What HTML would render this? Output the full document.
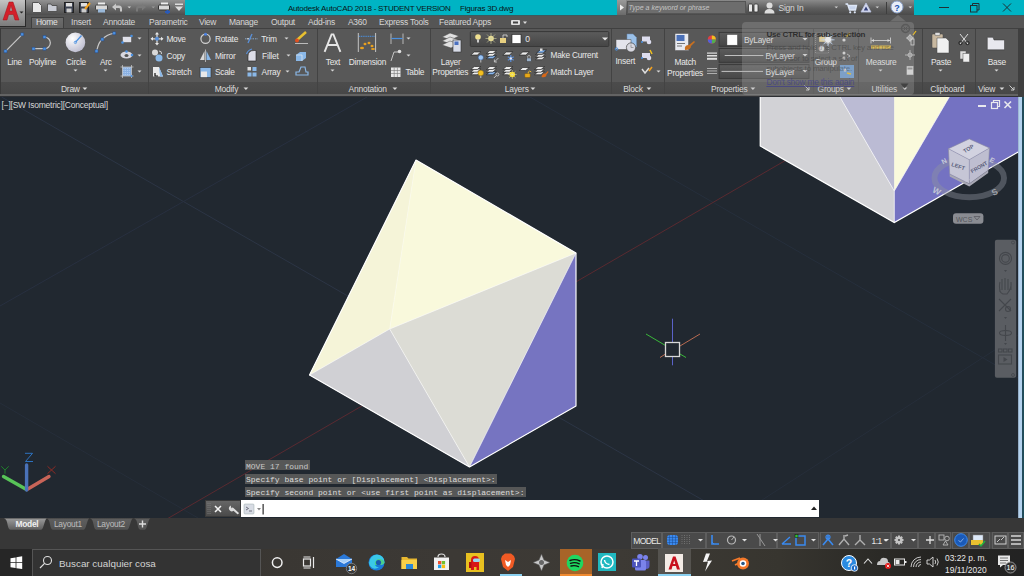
<!DOCTYPE html>
<html><head><meta charset="utf-8">
<style>
*{margin:0;padding:0;box-sizing:border-box}
html,body{width:1024px;height:576px;overflow:hidden;background:#212830;font-family:"Liberation Sans",sans-serif;position:relative}
.a{position:absolute}
.t{position:absolute;white-space:nowrap}
svg.a{overflow:visible}
</style></head><body>

<div class="a" style="left:0px;top:0px;width:1024px;height:15px;background:#00b4c4;"></div>
<div class="a" style="left:0px;top:0px;width:185px;height:15px;background:linear-gradient(#929292,#6a6a6a 55%,#4e4e4e);"></div>
<div class="a" style="left:745px;top:0px;width:169px;height:15px;background:linear-gradient(#8a8a8a,#5e5e5e 55%,#4a4a4a);"></div>
<div class="a" style="left:617px;top:0px;width:128px;height:15px;background:linear-gradient(#8a8a8a,#5e5e5e 55%,#4a4a4a);"></div>
<svg class="a" style="left:32px;top:2px;" width="10" height="11" viewBox="0 0 10 11"><path d="M0.5,0.5 H6.5 L9.5,3.5 V10.5 H0.5 Z" fill="#e8e8e8" stroke="#555"/></svg>
<svg class="a" style="left:47px;top:3px;" width="12" height="9" viewBox="0 0 12 9"><path d="M0.5,1 H4 L5,2.5 H10 V8.5 H0.5 Z" fill="#c9ccd4" stroke="#555"/></svg>
<svg class="a" style="left:64px;top:2px;" width="10" height="11" viewBox="0 0 10 11"><rect x="0.5" y="0.5" width="9" height="10" fill="#3c4250" stroke="#222"/><rect x="2" y="1" width="6" height="3.5" fill="#e0e0e0"/><rect x="2.5" y="6.5" width="5" height="4" fill="#ccc"/></svg>
<svg class="a" style="left:79px;top:2px;" width="12" height="11" viewBox="0 0 12 11"><rect x="0.5" y="0.5" width="9" height="10" fill="#3c4250" stroke="#222"/><rect x="2" y="1" width="6" height="3.5" fill="#e0e0e0"/><rect x="2.5" y="6.5" width="5" height="4" fill="#ccc"/><path d="M6,7 L11,1" stroke="#f0a020" stroke-width="2"/></svg>
<svg class="a" style="left:95px;top:2px;" width="13" height="11" viewBox="0 0 13 11"><rect x="3" y="0.5" width="7" height="3" fill="#eee"/><rect x="0.5" y="3" width="12" height="5" rx="1" fill="#d8d8d8" stroke="#444"/><rect x="3" y="7" width="7" height="3.5" fill="#9ab8d8"/></svg>
<svg class="a" style="left:111px;top:3px;" width="12" height="9" viewBox="0 0 12 9"><path d="M1,4 L5,0.5 V2.5 H8 Q11,2.5 11,6 V8.5 H9 V6 Q9,5 8,5 H5 V7.5 Z" fill="#c8c8c8"/></svg>
<svg class="a" style="left:127.2px;top:6.1px" width="4.6" height="2.8"><polygon points="0.5,0.5 4.1,0.5 2.3,2.3" fill="#cfcfcf"/></svg>
<svg class="a" style="left:135px;top:3px;" width="12" height="9" viewBox="0 0 12 9"><path d="M11,4 L7,0.5 V2.5 H4 Q1,2.5 1,6 V8.5 H3 V6 Q3,5 4,5 H7 V7.5 Z" fill="#7a7a7a"/></svg>
<svg class="a" style="left:150.7px;top:6.1px" width="4.6" height="2.8"><polygon points="0.5,0.5 4.1,0.5 2.3,2.3" fill="#9a9a9a"/></svg>
<svg class="a" style="left:158px;top:2px;" width="13" height="12" viewBox="0 0 13 12"><rect x="3" y="0.5" width="7" height="3" fill="#eee"/><rect x="0.5" y="3" width="11" height="5" rx="1" fill="#d8d8d8" stroke="#333"/><path d="M7,10 h5 M9.5,8 v4" stroke="#2a5ab8" stroke-width="2"/></svg>
<svg class="a" style="left:175px;top:3px;" width="8" height="9" viewBox="0 0 8 9"><rect x="0" y="0.5" width="8" height="1.5" fill="#ddd"/><polygon points="0,3.5 8,3.5 4,8" fill="#ddd"/></svg>
<div class="t" style="left:288px;top:5px;font-size:8.06px;line-height:8.06px;color:#0a1416;font-weight:normal;font-style:normal;font-family:'Liberation Sans',sans-serif;letter-spacing:-0.253px;">Autodesk AutoCAD 2018 - STUDENT VERSION</div>
<div class="t" style="left:460px;top:5px;font-size:8.06px;line-height:8.06px;color:#0a1416;font-weight:normal;font-style:normal;font-family:'Liberation Sans',sans-serif;letter-spacing:-0.230px;">Figuras 3D.dwg</div>
<div class="a" style="left:617px;top:0px;width:9px;height:15px;background:linear-gradient(#9a9a9a,#6a6a6a);"></div>
<svg class="a" style="left:619px;top:4px;" width="6" height="7" viewBox="0 0 6 7"><polygon points="1,0.5 5,3.5 1,6.5" fill="#eee"/></svg>
<div class="a" style="left:626.5px;top:1px;width:119px;height:13px;background:#6d6d6d;border:1px solid #555"></div>
<div class="t" style="left:628.5px;top:4px;font-size:7.05px;line-height:7.05px;color:#c4c4c4;font-weight:normal;font-style:italic;font-family:'Liberation Sans',sans-serif;">Type a keyword or phrase</div>
<svg class="a" style="left:748px;top:3px;" width="11" height="10" viewBox="0 0 11 10"><rect x="0.5" y="1" width="4" height="8" rx="1" fill="#e8e8e8" stroke="#333" stroke-width="0.8"/><rect x="6" y="1" width="4" height="8" rx="1" fill="#e8e8e8" stroke="#333" stroke-width="0.8"/></svg>
<svg class="a" style="left:764px;top:2px;" width="11" height="12" viewBox="0 0 11 12"><circle cx="5.5" cy="3.5" r="3" fill="#ddd"/><path d="M0.5,11.5 Q0.5,7 5.5,7 Q10.5,7 10.5,11.5 Z" fill="#ddd"/></svg>
<div class="t" style="left:778.5px;top:4px;font-size:8.48px;line-height:8.48px;color:#d8d8d8;font-weight:normal;font-style:normal;font-family:'Liberation Sans',sans-serif;letter-spacing:-0.213px;">Sign In</div>
<svg class="a" style="left:834.2px;top:6.1px" width="4.6" height="2.8"><polygon points="0.5,0.5 4.1,0.5 2.3,2.3" fill="#d0d0d0"/></svg>
<svg class="a" style="left:845px;top:3px;" width="13" height="11" viewBox="0 0 13 11"><path d="M0.5,1 H2.5 L4.5,7 H10.5 L11.5,2.5 H3.5" fill="#c8d4ec" stroke="#dde6f6" stroke-width="1.3"/><circle cx="5.2" cy="9.3" r="1.1" fill="#dde6f6"/><circle cx="9.8" cy="9.3" r="1.1" fill="#dde6f6"/></svg>
<svg class="a" style="left:860px;top:2px;" width="12" height="11" viewBox="0 0 12 11"><polygon points="6,1 11,10 1,10" fill="#d8dcf0" stroke="#b8c0e0" stroke-width="0.8"/><polygon points="6,4.5 8.3,8.5 3.7,8.5" fill="#34407a"/></svg>
<svg class="a" style="left:875.2px;top:6.1px" width="4.6" height="2.8"><polygon points="0.5,0.5 4.1,0.5 2.3,2.3" fill="#d0d0d0"/></svg>
<div class="a" style="left:886px;top:2px;width:1px;height:12px;background:#3e3e3e;"></div>
<svg class="a" style="left:890px;top:0px;" width="14" height="14" viewBox="0 0 14 14"><circle cx="7" cy="7" r="6" fill="#e8eef8" stroke="#8aa0c8"/><text x="7" y="10.5" font-size="9" font-weight="bold" text-anchor="middle" fill="#2050b0" font-family="Liberation Sans">?</text></svg>
<svg class="a" style="left:907.7px;top:6.1px" width="4.6" height="2.8"><polygon points="0.5,0.5 4.1,0.5 2.3,2.3" fill="#d0d0d0"/></svg>
<div class="a" style="left:939px;top:7px;width:10px;height:1px;background:#203034;"></div>
<svg class="a" style="left:970px;top:3px;" width="10" height="10" viewBox="0 0 10 10"><rect x="0.5" y="2.5" width="6.5" height="6.5" fill="none" stroke="#203034" stroke-width="1"/><path d="M2.5,2.5 V0.5 H9 V7 H7" fill="none" stroke="#203034" stroke-width="1"/></svg>
<svg class="a" style="left:1002px;top:3px;" width="10" height="10" viewBox="0 0 10 10"><path d="M1,0.5 L9,8.5 M9,0.5 L1,8.5" stroke="#203034" stroke-width="1"/></svg>
<div class="a" style="left:0px;top:15px;width:1024px;height:13px;background:#535353;"></div>
<div class="a" style="left:26px;top:15px;width:998px;height:13px;background:#555555;"></div>
<div class="a" style="left:30.5px;top:17px;width:33px;height:12px;background:linear-gradient(#6c6c6c,#606060);border:1px solid #3e3e3e;border-bottom:none"></div>
<div class="t" style="left:36px;top:18px;font-size:8.48px;line-height:8.48px;color:#e2e2e2;font-weight:normal;font-style:normal;font-family:'Liberation Sans',sans-serif;letter-spacing:-0.320px;">Home</div>
<div class="t" style="left:71px;top:18px;font-size:8.48px;line-height:8.48px;color:#d6d6d6;font-weight:normal;font-style:normal;font-family:'Liberation Sans',sans-serif;letter-spacing:-0.200px;">Insert</div>
<div class="t" style="left:103px;top:18px;font-size:8.48px;line-height:8.48px;color:#d6d6d6;font-weight:normal;font-style:normal;font-family:'Liberation Sans',sans-serif;letter-spacing:-0.240px;">Annotate</div>
<div class="t" style="left:149px;top:18px;font-size:8.48px;line-height:8.48px;color:#d6d6d6;font-weight:normal;font-style:normal;font-family:'Liberation Sans',sans-serif;letter-spacing:-0.232px;">Parametric</div>
<div class="t" style="left:199px;top:18px;font-size:8.48px;line-height:8.48px;color:#d6d6d6;font-weight:normal;font-style:normal;font-family:'Liberation Sans',sans-serif;letter-spacing:-0.258px;">View</div>
<div class="t" style="left:229px;top:18px;font-size:8.48px;line-height:8.48px;color:#d6d6d6;font-weight:normal;font-style:normal;font-family:'Liberation Sans',sans-serif;letter-spacing:-0.289px;">Manage</div>
<div class="t" style="left:271px;top:18px;font-size:8.48px;line-height:8.48px;color:#d6d6d6;font-weight:normal;font-style:normal;font-family:'Liberation Sans',sans-serif;letter-spacing:-0.240px;">Output</div>
<div class="t" style="left:308px;top:18px;font-size:8.48px;line-height:8.48px;color:#d6d6d6;font-weight:normal;font-style:normal;font-family:'Liberation Sans',sans-serif;letter-spacing:-0.233px;">Add-ins</div>
<div class="t" style="left:348px;top:18px;font-size:8.48px;line-height:8.48px;color:#d6d6d6;font-weight:normal;font-style:normal;font-family:'Liberation Sans',sans-serif;letter-spacing:-0.280px;">A360</div>
<div class="t" style="left:379px;top:18px;font-size:8.48px;line-height:8.48px;color:#d6d6d6;font-weight:normal;font-style:normal;font-family:'Liberation Sans',sans-serif;letter-spacing:-0.229px;">Express Tools</div>
<div class="t" style="left:439px;top:18px;font-size:8.48px;line-height:8.48px;color:#d6d6d6;font-weight:normal;font-style:normal;font-family:'Liberation Sans',sans-serif;letter-spacing:-0.240px;">Featured Apps</div>
<div class="a" style="left:185px;top:15px;width:432px;height:1px;background:#3c5a5e;"></div>
<div class="a" style="left:914px;top:15px;width:110px;height:1px;background:#3c5a5e;"></div>
<svg class="a" style="left:510px;top:19px;" width="18" height="8" viewBox="0 0 18 8"><rect x="1" y="1" width="9" height="5" rx="1" fill="#e0e0e0"/><rect x="3" y="2.5" width="5" height="2" fill="#444"/><polygon points="13,2.5 17,2.5 15,5" fill="#ddd"/></svg>
<div class="a" style="left:0px;top:0px;width:26px;height:27px;background:linear-gradient(#c4c4c4,#9c9c9c 50%,#7c7c7c);border-right:1px solid #2a2a2a;border-bottom:1px solid #2a2a2a"></div>
<svg class="a" style="left:2px;top:1px;" width="18" height="20" viewBox="0 0 18 20"><path d="M1,19 L7,1 L11,1 L17,19 L13,19 L11.4,13.5 L6.6,13.5 L5,19 Z M7.5,10 L10.5,10 L9,4.5 Z" fill="#d4202a" stroke="#a01018" stroke-width="0.5"/></svg>
<svg class="a" style="left:19.0px;top:11.0px" width="5" height="3"><polygon points="0.5,0.5 4.5,0.5 2.5,2.5" fill="#222"/></svg>
<div class="a" style="left:0px;top:28px;width:1024px;height:54px;background:#585858;"></div>
<div class="a" style="left:0px;top:28px;width:1024px;height:1px;background:#404040;"></div>
<div class="a" style="left:0px;top:82px;width:1024px;height:12px;background:linear-gradient(#4c4c4c,#474747);"></div>
<div class="a" style="left:0px;top:94px;width:1024px;height:3px;background:#636363;"></div>
<div class="a" style="left:0px;top:96px;width:1024px;height:1px;background:#2e3034;"></div>
<div class="a" style="left:147.5px;top:29px;width:1px;height:65px;background:#434343;"></div>
<div class="a" style="left:316.5px;top:29px;width:1px;height:65px;background:#434343;"></div>
<div class="a" style="left:429.5px;top:29px;width:1px;height:65px;background:#434343;"></div>
<div class="a" style="left:611px;top:29px;width:1px;height:65px;background:#434343;"></div>
<div class="a" style="left:664px;top:29px;width:1px;height:65px;background:#434343;"></div>
<div class="a" style="left:813px;top:29px;width:1px;height:65px;background:#434343;"></div>
<div class="a" style="left:857.5px;top:29px;width:1px;height:65px;background:#434343;"></div>
<div class="a" style="left:921.5px;top:29px;width:1px;height:65px;background:#434343;"></div>
<div class="a" style="left:974.5px;top:29px;width:1px;height:65px;background:#434343;"></div>
<div class="a" style="left:1018px;top:28px;width:6px;height:69px;background:#3f3f3f;"></div>
<div class="a" style="left:0px;top:28px;width:1px;height:66px;background:#3a3a3a;"></div>
<div class="t" style="left:61px;top:85px;font-size:8.48px;line-height:8.48px;color:#dadada;font-weight:normal;font-style:normal;font-family:'Liberation Sans',sans-serif;letter-spacing:-0.280px;">Draw</div>
<svg class="a" style="left:82.1px;top:87.1px" width="5.8" height="3.4"><polygon points="0.5,0.5 5.3,0.5 2.9,2.9" fill="#dadada"/></svg>
<div class="t" style="left:214.7px;top:85px;font-size:8.48px;line-height:8.48px;color:#dadada;font-weight:normal;font-style:normal;font-family:'Liberation Sans',sans-serif;letter-spacing:-0.236px;">Modify</div>
<svg class="a" style="left:243.1px;top:87.1px" width="5.8" height="3.4"><polygon points="0.5,0.5 5.3,0.5 2.9,2.9" fill="#dadada"/></svg>
<div class="t" style="left:348.6px;top:85px;font-size:8.48px;line-height:8.48px;color:#dadada;font-weight:normal;font-style:normal;font-family:'Liberation Sans',sans-serif;letter-spacing:-0.230px;">Annotation</div>
<svg class="a" style="left:391.90000000000003px;top:87.1px" width="5.8" height="3.4"><polygon points="0.5,0.5 5.3,0.5 2.9,2.9" fill="#dadada"/></svg>
<div class="t" style="left:504.7px;top:85px;font-size:8.48px;line-height:8.48px;color:#dadada;font-weight:normal;font-style:normal;font-family:'Liberation Sans',sans-serif;letter-spacing:-0.240px;">Layers</div>
<svg class="a" style="left:529.9px;top:87.1px" width="5.8" height="3.4"><polygon points="0.5,0.5 5.3,0.5 2.9,2.9" fill="#dadada"/></svg>
<div class="t" style="left:623.2px;top:85px;font-size:8.48px;line-height:8.48px;color:#dadada;font-weight:normal;font-style:normal;font-family:'Liberation Sans',sans-serif;letter-spacing:-0.235px;">Block</div>
<svg class="a" style="left:645.9px;top:87.1px" width="5.8" height="3.4"><polygon points="0.5,0.5 5.3,0.5 2.9,2.9" fill="#dadada"/></svg>
<div class="t" style="left:711px;top:85px;font-size:8.48px;line-height:8.48px;color:#dadada;font-weight:normal;font-style:normal;font-family:'Liberation Sans',sans-serif;letter-spacing:-0.219px;">Properties</div>
<svg class="a" style="left:750.1px;top:87.1px" width="5.8" height="3.4"><polygon points="0.5,0.5 5.3,0.5 2.9,2.9" fill="#dadada"/></svg>
<div class="t" style="left:817.6px;top:85px;font-size:8.48px;line-height:8.48px;color:#dadada;font-weight:normal;font-style:normal;font-family:'Liberation Sans',sans-serif;letter-spacing:-0.262px;">Groups</div>
<svg class="a" style="left:846.1px;top:87.1px" width="5.8" height="3.4"><polygon points="0.5,0.5 5.3,0.5 2.9,2.9" fill="#dadada"/></svg>
<div class="t" style="left:871.4px;top:85px;font-size:8.48px;line-height:8.48px;color:#dadada;font-weight:normal;font-style:normal;font-family:'Liberation Sans',sans-serif;letter-spacing:-0.172px;">Utilities</div>
<svg class="a" style="left:902.1px;top:87.1px" width="5.8" height="3.4"><polygon points="0.5,0.5 5.3,0.5 2.9,2.9" fill="#dadada"/></svg>
<div class="t" style="left:930.3px;top:85px;font-size:8.48px;line-height:8.48px;color:#dadada;font-weight:normal;font-style:normal;font-family:'Liberation Sans',sans-serif;letter-spacing:-0.228px;">Clipboard</div>
<div class="t" style="left:978px;top:85px;font-size:8.48px;line-height:8.48px;color:#dadada;font-weight:normal;font-style:normal;font-family:'Liberation Sans',sans-serif;letter-spacing:-0.258px;">View</div>
<svg class="a" style="left:999.1px;top:87.1px" width="5.8" height="3.4"><polygon points="0.5,0.5 5.3,0.5 2.9,2.9" fill="#dadada"/></svg>
<svg class="a" style="left:804px;top:85px;" width="6" height="6" viewBox="0 0 6 6"><path d="M0.5,0.5 L5,5 M5,2 V5 H2" stroke="#ccc" fill="none"/></svg>
<svg class="a" style="left:1009px;top:85px;" width="6" height="6" viewBox="0 0 6 6"><path d="M0.5,0.5 L5,5 M5,2 V5 H2" stroke="#ccc" fill="none"/></svg>
<svg class="a" style="left:0;top:97px" width="1024" height="421" viewBox="0 97 1024 421">
<rect x="0" y="97" width="1024" height="421" fill="#212830"/>
<line x1="1.6" y1="97" x2="720" y2="510" stroke="#2c3545" stroke-width="1"/>
<line x1="0" y1="306" x2="367" y2="97" stroke="#283040" stroke-width="1"/>
<line x1="530" y1="97" x2="1018" y2="378" stroke="#262f3c" stroke-width="1"/>
<line x1="0" y1="403" x2="198" y2="518" stroke="#262e3a" stroke-width="1"/>
<line x1="700" y1="540" x2="1018" y2="335" stroke="#262e3a" stroke-width="1"/>
<line x1="160" y1="523" x2="800" y2="152" stroke="#5a2a30" stroke-width="1"/>
<g stroke-linejoin="round">
<polygon points="416,160 576,253 576,406 469.5,467 309.5,375" fill="#f4f4ec"/>
<polygon points="416,160 389.7,329 309.5,375" fill="#f5f4d8"/>
<polygon points="416,160 576,253 389.7,329" fill="#f9f9dc"/>
<polygon points="309.5,375 389.7,329 469.5,467" fill="#d0d0d4"/>
<polygon points="389.7,329 576,253 469.5,467" fill="#dcdcd5"/>
<polygon points="576,253 576,406 469.5,467" fill="#7674c1"/>
<path d="M416,160 L389.7,329" fill="none" stroke="#ffffff" stroke-opacity="0.5" stroke-width="0.7"/><path d="M576,253 L389.7,329 L309.5,375 M389.7,329 L469.5,467 L576,253" fill="none" stroke="#ffffff" stroke-opacity="0.7" stroke-width="0.8"/>
<polygon points="416,160 576,253 576,406 469.5,467 309.5,375" fill="none" stroke="#ffffff" stroke-width="1.15"/>
</g>
<polygon points="760.2,97 1018.2,97 1018.2,152 894.3,222.6 760.2,146" fill="#f0f0f0"/>
<polygon points="760.2,97 840,97 894.3,191 894.3,222.6 760.2,146" fill="#d2d2d6"/>
<polygon points="840,97 894.3,97 894.3,191" fill="#bbbbd4"/>
<polygon points="894.3,97 949.3,97 894.3,191" fill="#fafadc"/>
<polygon points="949.3,97 1018.2,97 1018.2,152 894.3,222.6 894.3,191" fill="#7472c2"/>
<path d="M840,97 L894.3,191 L949.3,97 M894.3,191 V222.6" fill="none" stroke="#fff" stroke-opacity="0.75" stroke-width="0.9"/>
<polyline points="760.2,97 760.2,146 894.3,222.6 1018.2,152" fill="none" stroke="#fff" stroke-width="1.15"/>
<line x1="672.5" y1="318.7" x2="672.5" y2="342" stroke="#5a62c8" stroke-width="1"/><line x1="672.5" y1="357" x2="672.5" y2="365.3" stroke="#5a62c8" stroke-width="1"/>
<line x1="646" y1="334" x2="665.5" y2="345.5" stroke="#3ab83a" stroke-width="1"/><line x1="680" y1="354" x2="686" y2="357.5" stroke="#3ab83a" stroke-width="1"/>
<line x1="680" y1="346" x2="700" y2="334" stroke="#b86a50" stroke-width="1"/><line x1="660" y1="357.5" x2="665.5" y2="354" stroke="#b86a50" stroke-width="1"/>
<rect x="665.5" y="342.5" width="14" height="14" fill="none" stroke="#d8d8d8" stroke-width="1.3"/>
<line x1="26.5" y1="489.5" x2="3.5" y2="476.5" stroke="#58c458" stroke-width="3.4" stroke-linecap="round"/>
<line x1="27" y1="489.5" x2="49" y2="476.5" stroke="#c86458" stroke-width="3.4" stroke-linecap="round"/>
<line x1="26.6" y1="465" x2="26.6" y2="490" stroke="#4a72b8" stroke-width="3.4" stroke-linecap="round"/>
<path d="M25,453.3 H32.5 L25.5,461.5 H33" fill="none" stroke="#2f7ad0" stroke-width="0.9"/>
<path d="M1.3,466.3 L5,470 L8.7,466.3 M5,470 V473.7" fill="none" stroke="#1f8a2a" stroke-width="0.9"/>
<path d="M47.5,466.3 L55.5,473.7 M55.5,466.3 L47.5,473.7" fill="none" stroke="#9a2a22" stroke-width="0.9"/>
<ellipse cx="969.25" cy="178" rx="34.8" ry="19.2" fill="none" stroke="#9094a0" stroke-opacity="0.42" stroke-width="5.9"/>
<polygon points="949.7,174 969.3,183.8 988.2,170.2 988.2,173 969.3,186.5 949.7,176.5" fill="#a8a8b4"/>
<polygon points="969.3,138.9 989.5,148 969.3,159.7 948.4,148.7" fill="#d2d2e0"/>
<polygon points="948.4,148.7 969.3,159.7 969.3,183.8 949.7,174" fill="#c6c6d6"/>
<polygon points="969.3,159.7 989.5,148 988.2,170.2 969.3,183.8" fill="#bebed0"/>
<polygon points="969.3,138.9 989.5,148 988.2,170.2 969.3,183.8 949.7,174 948.4,148.7" fill="none" stroke="#8a8aa0" stroke-width="0.6"/><path d="M948.4,148.7 L969.3,159.7 L989.5,148 M969.3,159.7 V183.8" fill="none" stroke="#8a8aa0" stroke-width="0.5"/>
<text x="968.6" y="150.6" font-size="5.5" font-weight="bold" fill="#5a5e7c" text-anchor="middle" font-family="Liberation Sans" transform="rotate(-32 968.6 148.7)">TOP</text>
<text x="958.2" y="168.3" font-size="5.5" font-weight="bold" fill="#5a5e7c" text-anchor="middle" font-family="Liberation Sans" transform="rotate(18 958.2 166.3)">LEFT</text>
<text x="979" y="169" font-size="5.3" font-weight="bold" fill="#5a5e7c" text-anchor="middle" font-family="Liberation Sans" transform="rotate(-30 979 167)">FRONT</text>
<text x="941" y="163" font-size="7" font-weight="bold" fill="#c4c8d8" font-family="Liberation Sans" transform="rotate(-28 945 160)">N</text>
<text x="990" y="163" font-size="7" font-weight="bold" fill="#c4c8d8" font-family="Liberation Sans" transform="rotate(28 993 160)">E</text>
<text x="991" y="194" font-size="8.5" font-weight="bold" fill="#a4a8b0" font-family="Liberation Sans" transform="rotate(-28 996 190)">S</text>
<text x="933" y="195" font-size="8.5" font-weight="bold" fill="#c0c4d4" font-family="Liberation Sans" transform="rotate(28 939 191)">W</text>
<rect x="953" y="213.3" width="30.4" height="10.5" rx="3" fill="#8a8c92"/>
<text x="956" y="221.6" font-size="7" fill="#55575c" font-family="Liberation Sans">WCS</text>
<polygon points="974,216.5 980,216.5 977,220" fill="none" stroke="#5a5c62" stroke-width="0.8"/>
<rect x="978" y="105" width="8" height="2" fill="#e8e8ee"/>
<rect x="991.5" y="102.5" width="6" height="6" fill="none" stroke="#e8e8ee" stroke-width="1.2"/><path d="M993.5,102.5 V100.5 H999.5 V106.5 H997.5" fill="none" stroke="#e8e8ee" stroke-width="1.2"/>
<path d="M1004.5,101.5 L1011,108 M1011,101.5 L1004.5,108" stroke="#e8e8ee" stroke-width="1.6"/>
<rect x="1018.2" y="97" width="4" height="421" fill="#b4d2ee"/>
<rect x="1022.2" y="97" width="1.8" height="421" fill="#1f4e5c"/>
<rect x="994.9" y="239.7" width="21.3" height="138" rx="2" fill="#5a5d62"/><g fill="none" stroke="#44474c" stroke-width="1.1"><circle cx="1005.5" cy="258.4" r="6"/><circle cx="1005.5" cy="258.4" r="3.8"/><path d="M1000,292 Q999,285 1000,282 M1002,290 V279 M1005,290 V278 M1008,290 V279 M1011,290 V282 Q1012,288 1007,294 H1003 Q999,292 1000,289"/><path d="M999,299 L1011,311 M1011,299 L999,311"/><circle cx="1008" cy="309" r="2.5"/><ellipse cx="1005.5" cy="333" rx="6" ry="2.5"/><path d="M1005.5,325 V341"/><rect x="998.5" y="349" width="3.5" height="3"/><rect x="1003.5" y="349" width="3.5" height="3"/><rect x="1008.5" y="349" width="3.5" height="3"/><rect x="998.5" y="355" width="13" height="9"/></g><polygon points="1003.5,357 1003.5,362 1007.5,359.5" fill="#44474c"/><g fill="#44474c"><polygon points="1004,270 1007,270 1005.5,272"/><polygon points="1004,317 1007,317 1005.5,319"/><polygon points="1004,343 1007,343 1005.5,345"/></g><circle cx="1013" cy="242.5" r="1.5" fill="none" stroke="#44474c" stroke-width="0.8"/><circle cx="1013" cy="375" r="1.5" fill="none" stroke="#44474c" stroke-width="0.8"/>
</svg>
<div class="t" style="left:1.5px;top:101px;font-size:8.51px;line-height:8.51px;color:#d6d6d6;font-weight:normal;font-style:normal;font-family:'Liberation Sans',sans-serif;letter-spacing:-0.219px;">[&#8722;][SW Isometric][Conceptual]</div>
<div class="a" style="left:244.7px;top:460.4px;width:65.3px;height:10.1px;background:#5c5c5c;opacity:0.9"></div>
<div class="a" style="left:244.7px;top:474px;width:252px;height:9.6px;background:#5c5c5c;opacity:0.9"></div>
<div class="a" style="left:244.7px;top:487px;width:281.3px;height:10px;background:#5c5c5c;opacity:0.9"></div>
<div class="t" style="left:246px;top:463px;font-size:8px;line-height:8px;color:#c8c8c8;font-weight:normal;font-style:normal;font-family:'Liberation Mono',monospace;">MOVE 17 found</div>
<div class="t" style="left:246px;top:476px;font-size:8px;line-height:8px;color:#dcdcdc;font-weight:normal;font-style:normal;font-family:'Liberation Mono',monospace;">Specify base point or [Displacement] &lt;Displacement&gt;:</div>
<div class="t" style="left:246px;top:489px;font-size:8px;line-height:8px;color:#dcdcdc;font-weight:normal;font-style:normal;font-family:'Liberation Mono',monospace;">Specify second point or &lt;use first point as displacement&gt;:</div>
<div class="a" style="left:204.7px;top:500px;width:36.3px;height:17.4px;background:linear-gradient(#666,#4a4a4a);border:1px solid #3a3a3a"></div>
<div class="a" style="left:241px;top:500px;width:578px;height:17.4px;background:#ffffff;"></div>
<svg class="a" style="left:0px;top:28px;" width="150" height="54" viewBox="0 0 150 54"><line x1="5.5" y1="23.3" x2="22.3" y2="6.4" stroke="#c8c8c8" stroke-width="1.2"/><rect x="4.0" y="21.8" width="3" height="3" fill="#4a90e0" stroke="#2a4a80" stroke-width="0.5"/><rect x="20.8" y="4.9" width="3" height="3" fill="#4a90e0" stroke="#2a4a80" stroke-width="0.5"/><path d="M33.5,20.7 H44.5 A5.85,5.85 0 0 0 44.5,9" fill="none" stroke="#c8c8c8" stroke-width="1.2"/><rect x="32.0" y="19.2" width="3" height="3" fill="#4a90e0" stroke="#2a4a80" stroke-width="0.5"/><rect x="43.0" y="19.2" width="3" height="3" fill="#4a90e0" stroke="#2a4a80" stroke-width="0.5"/><rect x="43.0" y="7.5" width="3" height="3" fill="#4a90e0" stroke="#2a4a80" stroke-width="0.5"/><defs><radialGradient id="cg" cx="0.35" cy="0.3" r="0.8"><stop offset="0" stop-color="#ffffff"/><stop offset="1" stop-color="#b8b8cc"/></radialGradient></defs><circle cx="75.4" cy="14.4" r="9.8" fill="url(#cg)"/><line x1="75.4" y1="14.4" x2="81.5" y2="7.5" stroke="#4a90e0" stroke-width="1.3"/><circle cx="75.4" cy="14.4" r="1.2" fill="none" stroke="#4a90e0" stroke-width="0.8"/><path d="M96.5,23.3 Q99,13 102.4,11.4 Q107,6 114.3,5.3" fill="none" stroke="#c8c8c8" stroke-width="1.2"/><rect x="95.0" y="21.8" width="3" height="3" fill="#4a90e0" stroke="#2a4a80" stroke-width="0.5"/><rect x="100.9" y="9.9" width="3" height="3" fill="#4a90e0" stroke="#2a4a80" stroke-width="0.5"/><rect x="112.8" y="3.8" width="3" height="3" fill="#4a90e0" stroke="#2a4a80" stroke-width="0.5"/><rect x="122.5" y="8.5" width="9" height="6" rx="0.8" fill="#e0e0e8" stroke="#333" stroke-width="0.4"/><circle cx="122.5" cy="14.5" r="1.3" fill="#4a90e0"/><circle cx="131.5" cy="8" r="1.3" fill="#4a90e0"/><ellipse cx="126.5" cy="27" rx="6" ry="3.5" fill="#d8d8e0"/><ellipse cx="126.5" cy="27.5" rx="2" ry="1.5" fill="#555"/><circle cx="126.5" cy="23.5" r="1.3" fill="#4a90e0"/><circle cx="132" cy="27" r="1.3" fill="#4a90e0"/><rect x="122.5" y="39" width="9" height="9" fill="#8ab0e0"/><path d="M123.5,40.5 h7 M123.5,42.5 h7 M123.5,44.5 h7 M123.5,46.5 h7" stroke="#d8e8ff" stroke-width="0.6" stroke-dasharray="0.8,1"/><path d="M120.5,39 H133.5 M120.5,48 H133.5 M122.5,37 V50 M131.5,37 V50" stroke="#d0d0d0" stroke-width="0.7"/><circle cx="131.5" cy="48" r="1" fill="#4a90e0"/></svg>
<div class="t" style="left:7.2px;top:59px;font-size:8.27px;line-height:8.27px;color:#e8e8e8;font-weight:normal;font-style:normal;font-family:'Liberation Sans',sans-serif;letter-spacing:-0.222px;">Line</div>
<div class="t" style="left:28.9px;top:59px;font-size:8.27px;line-height:8.27px;color:#e8e8e8;font-weight:normal;font-style:normal;font-family:'Liberation Sans',sans-serif;letter-spacing:-0.206px;">Polyline</div>
<div class="t" style="left:66px;top:59px;font-size:8.27px;line-height:8.27px;color:#e8e8e8;font-weight:normal;font-style:normal;font-family:'Liberation Sans',sans-serif;letter-spacing:-0.200px;">Circle</div>
<div class="t" style="left:99.9px;top:59px;font-size:8.27px;line-height:8.27px;color:#e8e8e8;font-weight:normal;font-style:normal;font-family:'Liberation Sans',sans-serif;letter-spacing:-0.235px;">Arc</div>
<svg class="a" style="left:72.9px;top:68.5px" width="5" height="3"><polygon points="0.5,0.5 4.5,0.5 2.5,2.5" fill="#d8d8d8"/></svg>
<svg class="a" style="left:103.2px;top:68.5px" width="5" height="3"><polygon points="0.5,0.5 4.5,0.5 2.5,2.5" fill="#d8d8d8"/></svg>
<svg class="a" style="left:136.8px;top:37.0px" width="5" height="3"><polygon points="0.5,0.5 4.5,0.5 2.5,2.5" fill="#d8d8d8"/></svg>
<svg class="a" style="left:136.8px;top:53.5px" width="5" height="3"><polygon points="0.5,0.5 4.5,0.5 2.5,2.5" fill="#d8d8d8"/></svg>
<svg class="a" style="left:136.8px;top:70.0px" width="5" height="3"><polygon points="0.5,0.5 4.5,0.5 2.5,2.5" fill="#d8d8d8"/></svg>
<svg class="a" style="left:148px;top:28px;" width="170" height="54" viewBox="0 0 170 54"><path d="M9,5 V16 M3.5,10.8 H14.5" stroke="#d8d8d8" stroke-width="1.3"/><polygon points="9,4 7,6.5 11,6.5" fill="#e8e8e8"/><polygon points="9,17.5 7,15 11,15" fill="#e8e8e8"/><polygon points="2.5,10.8 5,8.8 5,12.8" fill="#e8e8e8"/><polygon points="15.5,10.8 13,8.8 13,12.8" fill="#e8e8e8"/><circle cx="9" cy="10.8" r="2" fill="#5a90d8"/><circle cx="7" cy="24.5" r="3" fill="#d8d8d8"/><circle cx="11" cy="30" r="3.5" fill="#8ab8e8"/><path d="M11,23 Q14,23 13.5,26" stroke="#ddd" fill="none" stroke-width="0.9"/><polygon points="5,39 11,39 15,48.5 5,48.5" fill="#eaeaea"/><polygon points="11,39 15,48.5 12,48.5" fill="#8ab8e8"/><path d="M7,45 V48 H10" stroke="#111" stroke-width="1.2" fill="none"/><circle cx="57.5" cy="10.8" r="4.6" fill="none" stroke="#d0d0d0" stroke-width="1.2"/><circle cx="57.5" cy="6.2" r="1.5" fill="#4a80e0"/><polygon points="52,32 56.5,23 56.5,32" fill="#d8d8d8"/><polygon points="58.5,23 58.5,32 63,32" fill="#8ab8e8"/><line x1="57.5" y1="21.5" x2="57.5" y2="34" stroke="#c8c8c8" stroke-width="0.8"/><rect x="52" y="39.5" width="11" height="10" fill="#8ab8e8"/><rect x="53" y="43.5" width="6" height="6" fill="#e8e8e8"/><rect x="52" y="39.5" width="11" height="10" fill="none" stroke="#333" stroke-width="0.6"/><path d="M97,10.8 H110" stroke="#8ab0d8" stroke-width="0.9" stroke-dasharray="1.5,1"/><line x1="100" y1="15" x2="104" y2="6" stroke="#5a90d8" stroke-width="1.3"/><line x1="99" y1="10.8" x2="101" y2="10.8" stroke="#d8d8d8" stroke-width="1"/><path d="M100,33 V28 Q100,22.5 106,22.5 H108 V33 Z" fill="#dcdce6" stroke="#222" stroke-width="0.6"/><path d="M98.5,26 Q100,22 104,21" stroke="#5a90d8" fill="none" stroke-width="1.2"/><rect x="99.5" y="39" width="3.5" height="3.5" fill="#e0e0e0"/><rect x="104.5" y="39" width="4" height="4" fill="#8ab8e8"/><rect x="99.5" y="44.5" width="4" height="4" fill="#8ab8e8"/><rect x="104.5" y="44.5" width="4" height="4" fill="#8ab8e8"/><path d="M149,12 L158,4" stroke="#e8c030" stroke-width="2.5"/><circle cx="149" cy="12.5" r="2" fill="#e05020"/><line x1="147" y1="15.5" x2="160" y2="15.5" stroke="#bbb" stroke-width="1"/><path d="M148,27 L152,24 H158 V30 L154,33 H148 Z" fill="#8ab8e8"/><path d="M148,27 H154 V33" stroke="#d8e4f0" fill="none" stroke-width="0.8"/><path d="M148,47 V44 H151 L153,39 H157 L158,44 H160 V47 Z" fill="none" stroke="#8ab8e8" stroke-width="1.2"/></svg>
<div class="t" style="left:166.4px;top:35px;font-size:8.37px;line-height:8.37px;color:#e8e8e8;font-weight:normal;font-style:normal;font-family:'Liberation Sans',sans-serif;letter-spacing:-0.287px;">Move</div>
<div class="t" style="left:166.6px;top:52px;font-size:8.37px;line-height:8.37px;color:#e8e8e8;font-weight:normal;font-style:normal;font-family:'Liberation Sans',sans-serif;letter-spacing:-0.274px;">Copy</div>
<div class="t" style="left:166.6px;top:68px;font-size:8.37px;line-height:8.37px;color:#e8e8e8;font-weight:normal;font-style:normal;font-family:'Liberation Sans',sans-serif;letter-spacing:-0.213px;">Stretch</div>
<div class="t" style="left:214.9px;top:35px;font-size:8.37px;line-height:8.37px;color:#e8e8e8;font-weight:normal;font-style:normal;font-family:'Liberation Sans',sans-serif;letter-spacing:-0.231px;">Rotate</div>
<div class="t" style="left:214.9px;top:52px;font-size:8.37px;line-height:8.37px;color:#e8e8e8;font-weight:normal;font-style:normal;font-family:'Liberation Sans',sans-serif;letter-spacing:-0.204px;">Mirror</div>
<div class="t" style="left:214.9px;top:68px;font-size:8.37px;line-height:8.37px;color:#e8e8e8;font-weight:normal;font-style:normal;font-family:'Liberation Sans',sans-serif;letter-spacing:-0.235px;">Scale</div>
<div class="t" style="left:261.3px;top:35px;font-size:8.37px;line-height:8.37px;color:#e8e8e8;font-weight:normal;font-style:normal;font-family:'Liberation Sans',sans-serif;letter-spacing:-0.231px;">Trim</div>
<div class="t" style="left:262px;top:52px;font-size:8.37px;line-height:8.37px;color:#e8e8e8;font-weight:normal;font-style:normal;font-family:'Liberation Sans',sans-serif;letter-spacing:-0.165px;">Fillet</div>
<div class="t" style="left:261.6px;top:68px;font-size:8.37px;line-height:8.37px;color:#e8e8e8;font-weight:normal;font-style:normal;font-family:'Liberation Sans',sans-serif;letter-spacing:-0.225px;">Array</div>
<svg class="a" style="left:284.1px;top:37.3px" width="5" height="3"><polygon points="0.5,0.5 4.5,0.5 2.5,2.5" fill="#d8d8d8"/></svg>
<svg class="a" style="left:286.0px;top:53.7px" width="5" height="3"><polygon points="0.5,0.5 4.5,0.5 2.5,2.5" fill="#d8d8d8"/></svg>
<svg class="a" style="left:285.0px;top:70.3px" width="5" height="3"><polygon points="0.5,0.5 4.5,0.5 2.5,2.5" fill="#d8d8d8"/></svg>
<svg class="a" style="left:322px;top:32px;" width="22" height="22" viewBox="0 0 22 22"><path d="M2.6,19.9 L9.6,2.4 H11.4 L18.4,19.9 M5.5,13 H15.5" fill="none" stroke="#e6e6e6" stroke-width="1.9"/></svg>
<svg class="a" style="left:348px;top:28px;" width="82" height="54" viewBox="0 0 82 54"><line x1="10.3" y1="5" x2="10.3" y2="24" stroke="#d0d0d0" stroke-width="0.9"/><line x1="27.6" y1="5" x2="27.6" y2="24" stroke="#d0d0d0" stroke-width="0.9"/><line x1="11" y1="8.3" x2="27" y2="8.3" stroke="#4a90e0" stroke-width="1" stroke-dasharray="1.2,0.6"/><ellipse cx="14" cy="20" rx="2" ry="1.2" fill="#e8a020"/><ellipse cx="17" cy="16" rx="1.5" ry="1.2" fill="#e8a020"/><ellipse cx="21" cy="15" rx="1.5" ry="1.2" fill="#e8a020"/><ellipse cx="24" cy="18" rx="1.5" ry="1.2" fill="#e8a020"/><ellipse cx="25" cy="21" rx="2" ry="1.1" fill="#e8a020"/><line x1="43" y1="5.5" x2="43" y2="16" stroke="#d0d0d0" stroke-width="0.8"/><line x1="55" y1="5.5" x2="55" y2="16" stroke="#d0d0d0" stroke-width="0.8"/><line x1="43.5" y1="10.5" x2="54.5" y2="10.5" stroke="#4a90e0" stroke-width="1.2"/><path d="M43,33 L46,24 L50,24" stroke="#d0d0d0" stroke-width="0.9" fill="none"/><circle cx="51.5" cy="23.5" r="1.8" fill="#e0e0e0"/><rect x="43" y="39.5" width="9.5" height="9.5" fill="#e8e8e8"/><path d="M43,42.5 H52.5 M43,45.5 H52.5 M46.2,39.5 V49 M49.4,39.5 V49" stroke="#777" stroke-width="0.6"/></svg>
<div class="t" style="left:325.7px;top:58px;font-size:8.37px;line-height:8.37px;color:#e8e8e8;font-weight:normal;font-style:normal;font-family:'Liberation Sans',sans-serif;letter-spacing:-0.215px;">Text</div>
<svg class="a" style="left:329.8px;top:68.5px" width="5" height="3"><polygon points="0.5,0.5 4.5,0.5 2.5,2.5" fill="#d8d8d8"/></svg>
<div class="t" style="left:348.8px;top:58px;font-size:8.37px;line-height:8.37px;color:#e8e8e8;font-weight:normal;font-style:normal;font-family:'Liberation Sans',sans-serif;letter-spacing:-0.247px;">Dimension</div>
<svg class="a" style="left:405.9px;top:37.3px" width="5" height="3"><polygon points="0.5,0.5 4.5,0.5 2.5,2.5" fill="#d8d8d8"/></svg>
<svg class="a" style="left:405.9px;top:53.5px" width="5" height="3"><polygon points="0.5,0.5 4.5,0.5 2.5,2.5" fill="#d8d8d8"/></svg>
<div class="t" style="left:405.4px;top:68px;font-size:8.37px;line-height:8.37px;color:#e8e8e8;font-weight:normal;font-style:normal;font-family:'Liberation Sans',sans-serif;letter-spacing:-0.225px;">Table</div>
<svg class="a" style="left:430px;top:28px;" width="182" height="54" viewBox="0 0 182 54"><g fill="#e0e0e0" stroke="#444" stroke-width="0.5"><polygon points="12,9 20,5 29,8 21,12"/><polygon points="12,13 20,9 29,12 21,16"/><polygon points="12,17 20,13 29,16 21,20"/></g><rect x="23" y="12" width="8" height="12" fill="#d8dce8" stroke="#333" stroke-width="0.6"/><rect x="24.5" y="13.5" width="4" height="3.5" fill="#4a70c0"/><defs><linearGradient id="ldg" x1="0" y1="0" x2="0" y2="1"><stop offset="0" stop-color="#5c5c5c"/><stop offset="1" stop-color="#454545"/></linearGradient></defs><rect x="40.3" y="3.6" width="138.5" height="14.9" rx="1" fill="url(#ldg)" stroke="#383838"/><circle cx="48" cy="9" r="2.8" fill="#f0e090"/><rect x="47" y="11.5" width="2" height="3" fill="#ccc"/><circle cx="61" cy="10.5" r="2.8" fill="#f0e090"/><path d="M61,5 V16 M55.5,10.5 H66.5 M57,6.5 L65,14.5 M65,6.5 L57,14.5" stroke="#d0d0a0" stroke-width="0.6"/><rect x="70" y="10" width="6" height="5" fill="#e8d080"/><path d="M73,10 V7 H77 V9" stroke="#ddd" fill="none" stroke-width="0.8"/><rect x="82" y="6.5" width="9" height="9" fill="#fff" stroke="#222" stroke-width="0.6"/><polygon points="172,9.5 178,9.5 175,12.5" fill="#e8e8e8"/></svg>
<svg class="a" style="left:470px;top:46px;" width="80" height="34" viewBox="0 0 80 34"><polygon points="0.8000000000000114,9.0 4.300000000000011,6.0 10.800000000000011,6.0 7.300000000000011,9.0" fill="#ececec" stroke="#1a1a1a" stroke-width="0.6"/><circle cx="10.800000000000011" cy="11.5" r="2.6" fill="#9ac4f4" stroke="#2a4a80" stroke-width="0.5"/><line x1="10.800000000000011" y1="14" x2="10.800000000000011" y2="16.5" stroke="#ddd" stroke-width="0.8"/><polygon points="16.399999999999977,12.7 19.899999999999977,9.7 26.399999999999977,9.7 22.899999999999977,12.7" fill="#8ab8f0" stroke="#1a1a1a" stroke-width="0.6"/><polygon points="16.399999999999977,10.1 19.899999999999977,7.1 26.399999999999977,7.1 22.899999999999977,10.1" fill="#ececec" stroke="#1a1a1a" stroke-width="0.6"/><polygon points="16.399999999999977,7.5 19.899999999999977,4.5 26.399999999999977,4.5 22.899999999999977,7.5" fill="#ececec" stroke="#1a1a1a" stroke-width="0.6"/><path d="M24.399999999999977,16 L28.399999999999977,12 M24.399999999999977,16 h2.5 M24.399999999999977,16 v-2.5" stroke="#c8c8c8" stroke-width="0.9" fill="none"/><polygon points="32.80000000000001,9.0 36.30000000000001,6.0 42.80000000000001,6.0 39.30000000000001,9.0" fill="#ececec" stroke="#1a1a1a" stroke-width="0.6"/><path d="M40.80000000000001,9 V16 M37.80000000000001,10.7 L43.80000000000001,14.3 M43.80000000000001,10.7 L37.80000000000001,14.3" stroke="#5a8ad0" stroke-width="1.3"/><circle cx="40.80000000000001" cy="12.5" r="1.2" fill="#dde8ff"/><polygon points="49.25,9.0 52.75,6.0 59.25,6.0 55.75,9.0" fill="#ececec" stroke="#1a1a1a" stroke-width="0.6"/><rect x="56.75" y="12" width="4.5" height="3.5" fill="#9ab0c8" stroke="#333" stroke-width="0.4"/><path d="M57.75,12 V10 Q59.05,8.7 60.25,10 V12" stroke="#bbb" stroke-width="0.8" fill="none"/><polygon points="65.5,13.7 69.0,10.7 75.5,10.7 72.0,13.7" fill="#ececec" stroke="#1a1a1a" stroke-width="0.6"/><polygon points="65.5,11.1 69.0,8.1 75.5,8.1 72.0,11.1" fill="#ececec" stroke="#1a1a1a" stroke-width="0.6"/><polygon points="65.5,8.5 69.0,5.5 75.5,5.5 72.0,8.5" fill="#ececec" stroke="#1a1a1a" stroke-width="0.6"/><polygon points="66.5,7.0 70.0,4.0 76.5,4.0 73.0,7.0" fill="#7aa8e0" stroke="#1a1a1a" stroke-width="0.6"/><rect x="70.0" y="2.5" width="2.5" height="2.5" fill="#ddd"/><polygon points="0.8000000000000114,28.7 4.300000000000011,25.7 10.800000000000011,25.7 7.300000000000011,28.7" fill="#ececec" stroke="#1a1a1a" stroke-width="0.6"/><polygon points="0.8000000000000114,26.1 4.300000000000011,23.1 10.800000000000011,23.1 7.300000000000011,26.1" fill="#ececec" stroke="#1a1a1a" stroke-width="0.6"/><polygon points="0.8000000000000114,23.5 4.300000000000011,20.5 10.800000000000011,20.5 7.300000000000011,23.5" fill="#ececec" stroke="#1a1a1a" stroke-width="0.6"/><circle cx="10.800000000000011" cy="27" r="2.8" fill="#f4c020" stroke="#8a6a10" stroke-width="0.4"/><line x1="10.800000000000011" y1="29.8" x2="10.800000000000011" y2="32" stroke="#ddd" stroke-width="0.8"/><polygon points="16.399999999999977,28.7 19.899999999999977,25.7 26.399999999999977,25.7 22.899999999999977,28.7" fill="#8ab8f0" stroke="#1a1a1a" stroke-width="0.6"/><polygon points="16.399999999999977,26.1 19.899999999999977,23.1 26.399999999999977,23.1 22.899999999999977,26.1" fill="#ececec" stroke="#1a1a1a" stroke-width="0.6"/><polygon points="16.399999999999977,23.5 19.899999999999977,20.5 26.399999999999977,20.5 22.899999999999977,23.5" fill="#ececec" stroke="#1a1a1a" stroke-width="0.6"/><circle cx="27.399999999999977" cy="28.5" r="1.5" fill="none" stroke="#ccc" stroke-width="0.9"/><path d="M26.399999999999977,29.5 L23.899999999999977,32" stroke="#ccc" stroke-width="1"/><polygon points="32.80000000000001,28.7 36.30000000000001,25.7 42.80000000000001,25.7 39.30000000000001,28.7" fill="#ececec" stroke="#1a1a1a" stroke-width="0.6"/><polygon points="32.80000000000001,26.1 36.30000000000001,23.1 42.80000000000001,23.1 39.30000000000001,26.1" fill="#ececec" stroke="#1a1a1a" stroke-width="0.6"/><polygon points="32.80000000000001,23.5 36.30000000000001,20.5 42.80000000000001,20.5 39.30000000000001,23.5" fill="#ececec" stroke="#1a1a1a" stroke-width="0.6"/><circle cx="42.30000000000001" cy="28.5" r="2.8" fill="#f8d818"/><path d="M42.30000000000001,24 V33 M37.80000000000001,28.5 H46.80000000000001 M39.10000000000001,25.3 L45.500000000000014,31.7 M45.500000000000014,25.3 L39.10000000000001,31.7" stroke="#e8e0a0" stroke-width="0.5"/><polygon points="49.25,24.5 52.75,21.5 59.25,21.5 55.75,24.5" fill="#ececec" stroke="#1a1a1a" stroke-width="0.6"/><rect x="54.75" y="27.5" width="5.5" height="4" rx="1" fill="#e8a818" stroke="#6a4a08" stroke-width="0.4"/><path d="M58.25,27.5 V26 Q59.75,24 61.25,26" stroke="#f0c030" stroke-width="0.9" fill="none"/><polygon points="64.5,28.7 68.0,25.7 74.5,25.7 71.0,28.7" fill="#ececec" stroke="#1a1a1a" stroke-width="0.6"/><polygon points="64.5,26.1 68.0,23.1 74.5,23.1 71.0,26.1" fill="#ececec" stroke="#1a1a1a" stroke-width="0.6"/><polygon points="64.5,23.5 68.0,20.5 74.5,20.5 71.0,23.5" fill="#ececec" stroke="#1a1a1a" stroke-width="0.6"/><path d="M71.5,31 Q72.5,27 75.5,27.5 L78.0,25 L78.5,26 L76.5,28.5 Q76.5,32 71.5,31 Z" fill="#d86818"/></svg>
<div class="t" style="left:440.8px;top:58px;font-size:8.37px;line-height:8.37px;color:#e8e8e8;font-weight:normal;font-style:normal;font-family:'Liberation Sans',sans-serif;letter-spacing:-0.235px;">Layer</div>
<div class="t" style="left:432.3px;top:68px;font-size:8.37px;line-height:8.37px;color:#e8e8e8;font-weight:normal;font-style:normal;font-family:'Liberation Sans',sans-serif;letter-spacing:-0.214px;">Properties</div>
<div class="t" style="left:525.2px;top:35px;font-size:8.48px;line-height:8.48px;color:#e8e8e8;font-weight:normal;font-style:normal;font-family:'Liberation Sans',sans-serif;letter-spacing:-0.267px;">0</div>
<div class="t" style="left:550.6px;top:52px;font-size:8.27px;line-height:8.27px;color:#e8e8e8;font-weight:normal;font-style:normal;font-family:'Liberation Sans',sans-serif;letter-spacing:-0.237px;">Make Current</div>
<div class="t" style="left:550.6px;top:69px;font-size:8.27px;line-height:8.27px;color:#e8e8e8;font-weight:normal;font-style:normal;font-family:'Liberation Sans',sans-serif;letter-spacing:-0.235px;">Match Layer</div>
<svg class="a" style="left:612px;top:28px;" width="52" height="54" viewBox="0 0 52 54"><path d="M15,6 H21 L24.5,9.5 V19 H15 Z" fill="#9ac0e8" stroke="#6a8ab0" stroke-width="0.5"/><path d="M4,11.5 H19 V21.5 H4 Z" fill="#e4e4ec" stroke="#444" stroke-width="0.5"/><circle cx="19" cy="19.5" r="4.6" fill="#d8d8e0" stroke="#444" stroke-width="0.7"/><path d="M19,16.5 V19.5 H21.5" stroke="#777" stroke-width="0.6" fill="none"/><circle cx="4.5" cy="21" r="1.3" fill="none" stroke="#4a90e0" stroke-width="0.9"/><rect x="30" y="8.5" width="8" height="5" fill="#dde"/><circle cx="37" cy="14" r="2.3" fill="#dde"/><circle cx="30" cy="14" r="1" fill="#4a90e0"/><rect x="30" y="25" width="8" height="5" fill="#dde"/><circle cx="37" cy="30" r="2.3" fill="#dde"/><path d="M38,22 L40,26" stroke="#f0c020" stroke-width="1.5"/><circle cx="30" cy="30" r="1" fill="#4a90e0"/><path d="M30,41 L33,45 L37,40" stroke="#ddd" fill="none" stroke-width="1.5"/><path d="M37,43 L40,39" stroke="#f0a020" stroke-width="1.5"/></svg>
<div class="t" style="left:615.4px;top:57px;font-size:8.37px;line-height:8.37px;color:#e8e8e8;font-weight:normal;font-style:normal;font-family:'Liberation Sans',sans-serif;letter-spacing:-0.196px;">Insert</div>
<svg class="a" style="left:655.8px;top:69.7px" width="5" height="3"><polygon points="0.5,0.5 4.5,0.5 2.5,2.5" fill="#d8d8d8"/></svg>
<svg class="a" style="left:664px;top:28px;" width="150" height="54" viewBox="0 0 150 54"><rect x="11" y="5.5" width="13.5" height="17" fill="#e8eaf0" stroke="#555" stroke-width="0.5"/><rect x="12.5" y="7" width="8" height="6" fill="#4a70b8"/><path d="M13,15.5 H21 M13,18 H18" stroke="#555" stroke-width="0.8"/><path d="M21,22 Q20,17 25,17 L30,13 L31,14 L27,18 Q27,22 21,22 Z" fill="#c87020"/><circle cx="47.8" cy="11.5" r="4" fill="#e04040"/><path d="M47.8,11.5 L47.8,7.5 A4,4 0 0 1 51.8,11.5 Z" fill="#f0c020"/><path d="M47.8,11.5 L51.8,11.5 A4,4 0 0 1 47.8,15.5 Z" fill="#50b050"/><path d="M47.8,11.5 L47.8,15.5 A4,4 0 0 1 43.8,11.5 Z" fill="#5060e0"/><g fill="#e0e0e0"><rect x="43" y="24.5" width="10" height="1.2"/><rect x="43" y="27" width="10" height="1.5"/><rect x="43" y="29.8" width="10" height="2"/></g><g fill="#b8b8b8"><rect x="43" y="40" width="10" height="0.9"/><rect x="43" y="42.5" width="10" height="0.9"/><rect x="43" y="45" width="10" height="0.9"/></g><defs><linearGradient id="pdg" x1="0" y1="0" x2="0" y2="1"><stop offset="0" stop-color="#5c5c5c"/><stop offset="1" stop-color="#474747"/></linearGradient></defs><rect x="55.1" y="4.4" width="89.9" height="13.9" fill="url(#pdg)" stroke="#3a3a3a"/><rect x="55.1" y="20.5" width="89.9" height="13.9" fill="url(#pdg)" stroke="#3a3a3a"/><rect x="55.1" y="36.6" width="89.9" height="13.9" fill="url(#pdg)" stroke="#3a3a3a"/><rect x="62.9" y="6.4" width="10.7" height="10.8" fill="#fff" stroke="#333" stroke-width="0.5"/><line x1="60.7" y1="27.5" x2="99.4" y2="27.5" stroke="#f0f0f0" stroke-width="0.7"/><line x1="57.5" y1="43.4" x2="99" y2="43.4" stroke="#e0e0e0" stroke-width="0.8"/><polygon points="138.5,10 143.5,10 141,12.5" fill="#ddd"/><polygon points="138.5,26 143.5,26 141,28.5" fill="#ddd"/><polygon points="138.5,42 143.5,42 141,44.5" fill="#ddd"/></svg>
<div class="t" style="left:674.5px;top:58px;font-size:8.37px;line-height:8.37px;color:#e8e8e8;font-weight:normal;font-style:normal;font-family:'Liberation Sans',sans-serif;letter-spacing:-0.256px;">Match</div>
<div class="t" style="left:667.1px;top:69px;font-size:8.37px;line-height:8.37px;color:#e8e8e8;font-weight:normal;font-style:normal;font-family:'Liberation Sans',sans-serif;letter-spacing:-0.214px;">Properties</div>
<div class="t" style="left:744px;top:36px;font-size:8.37px;line-height:8.37px;color:#e8e8e8;font-weight:normal;font-style:normal;font-family:'Liberation Sans',sans-serif;letter-spacing:-0.246px;">ByLayer</div>
<div class="t" style="left:765.6px;top:52px;font-size:8.37px;line-height:8.37px;color:#e8e8e8;font-weight:normal;font-style:normal;font-family:'Liberation Sans',sans-serif;letter-spacing:-0.246px;">ByLayer</div>
<div class="t" style="left:765.6px;top:68px;font-size:8.37px;line-height:8.37px;color:#e8e8e8;font-weight:normal;font-style:normal;font-family:'Liberation Sans',sans-serif;letter-spacing:-0.246px;">ByLayer</div>
<svg class="a" style="left:813px;top:28px;" width="211" height="54" viewBox="0 0 211 54"><rect x="2.5" y="5" width="13" height="20" fill="none" stroke="#aaa" stroke-dasharray="1,1" stroke-width="0.6"/><rect x="6" y="8" width="6" height="6" fill="#f0d890" stroke="#555" stroke-width="0.4"/><circle cx="8.7" cy="20.4" r="3" fill="#e8e8e8" stroke="#555" stroke-width="0.4"/><path d="M15,5.5 V18 M8.5,11.8 H21.5 M10.5,7.3 L19.5,16.3 M19.5,7.3 L10.5,16.3" stroke="#bcd8ff" stroke-width="0.9"/><circle cx="15" cy="11.8" r="3" fill="#ffffff"/><circle cx="15" cy="11.8" r="4.5" fill="#ffffff" fill-opacity="0.35"/><circle cx="31" cy="12" r="1.6" fill="#ddd"/><path d="M33,9 L37,5" stroke="#f0c020" stroke-width="1.3"/><circle cx="31" cy="25" r="1.5" fill="#ddd"/><circle cx="31" cy="30" r="1.5" fill="#ddd"/><path d="M34,26 L37,28 L34,30" stroke="#ccc" fill="none" stroke-width="0.8"/><rect x="27" y="37" width="14" height="13" fill="#6a9ad0"/><circle cx="32" cy="42" r="1.5" fill="#eee"/><path d="M34,45 L38,46" stroke="#f0c020" stroke-width="1.5"/><line x1="58.5" y1="12.5" x2="77" y2="12.5" stroke="#e8e8e8" stroke-width="0.8"/><path d="M58,9.5 V15.5 M77.5,9.5 V15.5" stroke="#e8e8e8" stroke-width="0.8"/><polygon points="58.5,12.5 61,11 61,14" fill="#e8e8e8"/><polygon points="77,12.5 74.5,11 74.5,14" fill="#e8e8e8"/><rect x="58" y="17.5" width="20" height="3.2" fill="#e8c040"/><path d="M59,17.5 v1.5 M61,17.5 v1.5 M63,17.5 v1.5 M65,17.5 v1.5 M67,17.5 v1.5 M69,17.5 v1.5 M71,17.5 v1.5 M73,17.5 v1.5 M75,17.5 v1.5" stroke="#8a6a10" stroke-width="0.5"/><circle cx="97" cy="10" r="2.3" fill="none" stroke="#ddd" stroke-width="1"/><path d="M97,6 V14 M93,10 H101" stroke="#ddd" stroke-width="0.8"/><rect x="98" y="11" width="3" height="6" fill="none" stroke="#ddd" stroke-width="0.8"/><path d="M100,7 L103,3" stroke="#f0c020" stroke-width="1.2"/><circle cx="97" cy="27" r="2" fill="none" stroke="#ccc" stroke-width="0.9"/><path d="M97,22 V32 M92,27 H102" stroke="#ccc" stroke-width="0.8"/><rect x="93.5" y="38" width="7" height="9" fill="#e0e0e0" stroke="#666" stroke-width="0.5"/><rect x="94.5" y="39.5" width="5" height="2" fill="#888"/><rect x="119" y="6" width="11" height="14" rx="1" fill="#c8b8a0" stroke="#444" stroke-width="0.5"/><rect x="122" y="4.5" width="5" height="3" fill="#ddd" stroke="#444" stroke-width="0.4"/><path d="M124,10 H133 L136,13 V25 H124 Z" fill="#f0f0f0" stroke="#444" stroke-width="0.5"/><path d="M147,6 L155,16 M155,6 L147,16" stroke="#ddd" stroke-width="1"/><circle cx="147.5" cy="15" r="1.7" fill="none" stroke="#222" stroke-width="0.9"/><circle cx="154.5" cy="15" r="1.7" fill="none" stroke="#222" stroke-width="0.9"/><rect x="147" y="23" width="6" height="8" fill="#ddd" stroke="#555" stroke-width="0.5"/><rect x="150" y="25.5" width="6.5" height="8.5" fill="#eee" stroke="#555" stroke-width="0.5"/><path d="M174.3,9.3 H180 L181,12 H191.5 V21.8 H174.3 Z" fill="#e8e8ee" stroke="#333" stroke-width="0.5"/></svg>
<div class="t" style="left:814.8px;top:58px;font-size:8.37px;line-height:8.37px;color:#e8e8e8;font-weight:normal;font-style:normal;font-family:'Liberation Sans',sans-serif;letter-spacing:-0.261px;">Group</div>
<div class="t" style="left:865.8px;top:58px;font-size:8.37px;line-height:8.37px;color:#e8e8e8;font-weight:normal;font-style:normal;font-family:'Liberation Sans',sans-serif;letter-spacing:-0.261px;">Measure</div>
<svg class="a" style="left:878.1px;top:68.5px" width="5" height="3"><polygon points="0.5,0.5 4.5,0.5 2.5,2.5" fill="#d8d8d8"/></svg>
<div class="t" style="left:931px;top:58px;font-size:8.37px;line-height:8.37px;color:#e8e8e8;font-weight:normal;font-style:normal;font-family:'Liberation Sans',sans-serif;letter-spacing:-0.240px;">Paste</div>
<svg class="a" style="left:937.5px;top:69.0px" width="5" height="3"><polygon points="0.5,0.5 4.5,0.5 2.5,2.5" fill="#d8d8d8"/></svg>
<div class="t" style="left:987.8px;top:58px;font-size:8.37px;line-height:8.37px;color:#e8e8e8;font-weight:normal;font-style:normal;font-family:'Liberation Sans',sans-serif;letter-spacing:-0.268px;">Base</div>
<svg class="a" style="left:993.5px;top:68.5px" width="5" height="3"><polygon points="0.5,0.5 4.5,0.5 2.5,2.5" fill="#d8d8d8"/></svg>
<div class="a" style="left:742.4px;top:21.5px;width:171.6px;height:73.3px;background:rgba(175,175,175,0.28);border-radius:4px"></div>
<svg class="a" style="left:890px;top:15px;" width="16" height="7" viewBox="0 0 16 7"><polygon points="0,6.5 8,0 16,6.5" fill="rgba(175,175,175,0.28)"/></svg>
<svg class="a" style="left:900px;top:23px;" width="11" height="11" viewBox="0 0 11 11"><circle cx="5.5" cy="5.5" r="4" fill="none" stroke="#5a5a5a" stroke-width="1.4"/><path d="M3.5,3.5 L7.5,7.5 M7.5,3.5 L3.5,7.5" stroke="#5a5a5a" stroke-width="1"/></svg>
<svg class="a" style="left:900px;top:83px;" width="9" height="6" viewBox="0 0 9 6"><polygon points="0.5,0.5 8.5,0.5 4.5,5.5" fill="#3a3a3a" fill-opacity="0.8"/></svg>
<div class="t" style="left:766.4px;top:31px;font-size:8.01px;line-height:8.01px;color:rgba(30,30,30,0.82);font-weight:bold;font-style:normal;font-family:'Liberation Sans',sans-serif;letter-spacing:-0.227px;">Use CTRL for sub-selection</div>
<div class="t" style="left:766.4px;top:44px;font-size:8.01px;line-height:8.01px;color:rgba(45,45,45,0.42);font-weight:normal;font-style:normal;font-family:'Liberation Sans',sans-serif;letter-spacing:-0.217px;">Press and hold the CTRL key and use</div>
<div class="t" style="left:766.4px;top:55px;font-size:8.01px;line-height:8.01px;color:rgba(45,45,45,0.42);font-weight:normal;font-style:normal;font-family:'Liberation Sans',sans-serif;letter-spacing:-0.186px;">the cursor to select a set of</div>
<div class="t" style="left:766.4px;top:65px;font-size:8.01px;line-height:8.01px;color:rgba(45,45,45,0.42);font-weight:normal;font-style:normal;font-family:'Liberation Sans',sans-serif;letter-spacing:-0.204px;">subobjects to manipulate.</div>
<div class="t" style="left:766.4px;top:78px;font-size:8.37px;line-height:8.37px;color:rgba(50,50,150,0.55);font-weight:normal;font-style:normal;font-family:'Liberation Sans',sans-serif;letter-spacing:-0.218px;text-decoration:underline">Don&#39;t show me this again</div>
<div class="a" style="left:0px;top:518px;width:1024px;height:31px;background:#373737;"></div>
<svg class="a" style="left:0px;top:518px;" width="160" height="13" viewBox="0 0 160 13"><defs><linearGradient id="mg" x1="0" y1="0" x2="0" y2="1"><stop offset="0" stop-color="#9a9a9a"/><stop offset="1" stop-color="#5e5e5e"/></linearGradient><linearGradient id="lg" x1="0" y1="0" x2="0" y2="1"><stop offset="0" stop-color="#5e5e5e"/><stop offset="1" stop-color="#525252"/></linearGradient></defs><path d="M46,0.5 C48,0.5 48.8,1.5 49.6,4.5 L50.6,9 C51.2,11 52.2,11.8 54,11.8 L82.5,11.8 C84.3,11.8 85.0,11 85.7,9 L87.7,2.8 C88.3,1 88.9,0.5 90.0,0.5 Z" fill="url(#lg)"/><path d="M89.5,0.5 C91.5,0.5 92.3,1.5 93.1,4.5 L94.1,9 C94.7,11 95.7,11.8 97.5,11.8 L126,11.8 C127.8,11.8 128.5,11 129.2,9 L131.2,2.8 C131.8,1 132.4,0.5 133.5,0.5 Z" fill="url(#lg)"/><path d="M133.5,0.5 C135.5,0.5 136.3,1.5 137.1,4.5 L138.1,9 C138.7,11 139.7,11.8 141.5,11.8 L143.5,11.8 C145.3,11.8 146.0,11 146.7,9 L148.7,2.8 C149.3,1 149.9,0.5 151.0,0.5 Z" fill="url(#lg)"/><path d="M3.5,0.5 C5.5,0.5 6.3,1.5 7.1,4.5 L8.1,9 C8.7,11 9.7,11.8 11.5,11.8 L40,11.8 C41.8,11.8 42.5,11 43.2,9 L45.2,2.8 C45.8,1 46.4,0.5 47.5,0.5 Z" fill="url(#mg)"/><path d="M139,6 H146 M142.5,2.5 V9.5" stroke="#dddddd" stroke-width="1.4"/></svg>
<div class="t" style="left:15.6px;top:520px;font-size:8.37px;line-height:8.37px;color:#f0f0f0;font-weight:bold;font-style:normal;font-family:'Liberation Sans',sans-serif;letter-spacing:-0.272px;">Model</div>
<div class="t" style="left:53.9px;top:520px;font-size:8.37px;line-height:8.37px;color:#bcbcbc;font-weight:normal;font-style:normal;font-family:'Liberation Sans',sans-serif;letter-spacing:-0.239px;">Layout1</div>
<div class="t" style="left:96.9px;top:520px;font-size:8.37px;line-height:8.37px;color:#bcbcbc;font-weight:normal;font-style:normal;font-family:'Liberation Sans',sans-serif;letter-spacing:-0.239px;">Layout2</div>
<div class="a" style="left:630.5px;top:531.5px;width:394px;height:17px;background:#4a4a4a;"></div>
<div class="a" style="left:630.5px;top:531.5px;width:31.5px;height:17px;background:transparent;border:1px solid #5e5e5e"></div>
<div class="a" style="left:662px;top:531.5px;width:44px;height:17px;background:transparent;border:1px solid #5e5e5e"></div>
<div class="a" style="left:706px;top:531.5px;width:70.5px;height:17px;background:transparent;border:1px solid #5e5e5e"></div>
<div class="a" style="left:777px;top:531.5px;width:41.5px;height:17px;background:transparent;border:1px solid #5e5e5e"></div>
<div class="a" style="left:820px;top:531.5px;width:70.5px;height:17px;background:transparent;border:1px solid #5e5e5e"></div>
<div class="a" style="left:891px;top:531.5px;width:26.5px;height:17px;background:transparent;border:1px solid #5e5e5e"></div>
<div class="a" style="left:918px;top:531.5px;width:16.5px;height:17px;background:transparent;border:1px solid #5e5e5e"></div>
<div class="a" style="left:935px;top:531.5px;width:16px;height:17px;background:transparent;border:1px solid #5e5e5e"></div>
<div class="a" style="left:952px;top:531.5px;width:16.5px;height:17px;background:transparent;border:1px solid #5e5e5e"></div>
<div class="a" style="left:969px;top:531.5px;width:21px;height:17px;background:transparent;border:1px solid #5e5e5e"></div>
<div class="a" style="left:992px;top:531.5px;width:15.5px;height:17px;background:transparent;border:1px solid #5e5e5e"></div>
<div class="a" style="left:1008px;top:531.5px;width:16px;height:17px;background:transparent;border:1px solid #5e5e5e"></div>
<div class="t" style="left:633.3px;top:537px;font-size:8.59px;line-height:8.59px;color:#e8e8e8;font-weight:normal;font-style:normal;font-family:'Liberation Sans',sans-serif;letter-spacing:-0.704px;">MODEL</div>
<svg class="a" style="left:662px;top:531px;" width="362" height="18" viewBox="0 0 362 18"><g fill="#3a8af0"><rect x="5" y="4" width="11" height="10" rx="3"/></g><path d="M5,6.5 H16 M5,9 H16 M5,11.5 H16 M7.5,4 V14 M10.5,4 V14 M13.5,4 V14" stroke="#1a4a90" stroke-width="0.5"/><path d="M20,4 V14 M22.5,4 V14 M25,4 V14 M27.5,4 V14" stroke="#7a7a7a" stroke-width="0.8" stroke-dasharray="1,1"/><polygon points="36,8 41,8 38.5,10.5" fill="#e0e0e0"/><path d="M50,4 V13 H57" stroke="#3a8af0" stroke-width="1.6" fill="none"/><path d="M50,11 L52,13" stroke="#3a8af0" stroke-width="1"/><circle cx="69.5" cy="9" r="4" fill="none" stroke="#b8b8b8" stroke-width="1.2"/><path d="M69.5,9 L72,6" stroke="#b8b8b8" stroke-width="1"/><polygon points="80,8 85,8 82.5,10.5" fill="#e0e0e0"/><path d="M95,3 L103,15 M98,3 V15" stroke="#9a9a9a" stroke-width="1"/><polygon points="111,8 116,8 113.5,10.5" fill="#e0e0e0"/><path d="M120,13 H129 M120,13 L128,6" stroke="#3a8af0" stroke-width="1.4" fill="none"/><rect x="134" y="5" width="9" height="9" fill="none" stroke="#3a8af0" stroke-width="1.5"/><rect x="133" y="3.5" width="3" height="3" fill="#30c030" stroke="#111" stroke-width="0.5"/><polygon points="149,8 154,8 151.5,10.5" fill="#e0e0e0"/><path d="M161,14 L166,8 L171,14 M166,8 V4" stroke="#3a8af0" stroke-width="1.6" fill="none"/><circle cx="166" cy="6" r="2" fill="none" stroke="#3a8af0" stroke-width="1.2"/><path d="M177,14 L182,8 L187,14 M182,8 V4 M183,5 L186,4" stroke="#b0b0b0" stroke-width="1.4" fill="none"/><path d="M193,14 L198,9 L203,14 M198,9 V4" stroke="#b0b0b0" stroke-width="1.4" fill="none"/><polygon points="222,8 227,8 224.5,10.5" fill="#e0e0e0"/><path d="M237,4.5 V13.5 M232.5,9 H241.5 M233.8,5.8 L240.2,12.2 M240.2,5.8 L233.8,12.2" stroke="#c4c4c4" stroke-width="2"/><circle cx="237" cy="9" r="3.6" fill="#c4c4c4"/><circle cx="237" cy="9" r="1.1" fill="#4a4a4a"/><polygon points="249,8 254,8 251.5,10.5" fill="#e0e0e0"/><path d="M264,9 H272 M268,5 V13" stroke="#e0e0e0" stroke-width="1.3"/><rect x="277" y="4" width="5" height="5" fill="none" stroke="#b8b8b8" stroke-width="0.9"/><circle cx="285" cy="7.5" r="2.3" fill="none" stroke="#b8b8b8" stroke-width="0.9"/><polygon points="281,14 283.5,10 286,14" fill="none" stroke="#b8b8b8" stroke-width="0.9"/><circle cx="299" cy="9" r="6.3" fill="#1a5ab8" stroke="#3a8af0" stroke-width="1"/><path d="M296.5,9.5 L298.5,11 L301.5,7.5" stroke="#9ac0f0" stroke-width="0.8" fill="none"/><rect x="311" y="4" width="10" height="7" fill="#dce8f8" stroke="#888" stroke-width="0.5"/><rect x="309" y="9" width="12" height="5" fill="#e8c030"/><path d="M317,13 L319,15 L323,10" stroke="#20b040" stroke-width="1.5" fill="none"/><rect x="333" y="5" width="11" height="8" fill="none" stroke="#d0d0d0" stroke-width="1"/><path d="M335,11 L338,8 M339,9 L342,6" stroke="#d0d0d0" stroke-width="0.9"/><path d="M349,5 H359 M349,9 H359 M349,13 H359" stroke="#d8d8d8" stroke-width="1.5"/></svg>
<div class="t" style="left:871.5px;top:537px;font-size:8.36px;line-height:8.36px;color:#e8e8e8;font-weight:normal;font-style:normal;font-family:'Liberation Sans',sans-serif;letter-spacing:-0.445px;">1:1</div>
<svg class="a" style="left:882.5px;top:538.5px" width="5" height="3"><polygon points="0.5,0.5 4.5,0.5 2.5,2.5" fill="#e8e8e8"/></svg>
<div class="a" style="left:658px;top:548px;width:32px;height:1px;background:#555;"></div>
<div class="a" style="left:0px;top:549px;width:1024px;height:27px;background:linear-gradient(to right,#2a2928 0px,#363431 200px,#3a3733 280px,#3c3935 450px,#3d3a35 620px,#37352f 780px,#2c2b27 870px,#252422 930px,#232323 1024px);"></div>
<div class="a" style="left:0px;top:549px;width:32px;height:27px;background:#262626;"></div>
<svg class="a" style="left:10px;top:556px;" width="13" height="14" viewBox="0 0 13 14"><g fill="#ffffff"><polygon points="0.5,2.2 5.6,1.4 5.6,6.3 0.5,6.3"/><polygon points="6.4,1.2 12.2,0.3 12.2,6.3 6.4,6.3"/><polygon points="0.5,7.1 5.6,7.1 5.6,12 0.5,11.2"/><polygon points="6.4,7.1 12.2,7.1 12.2,13.1 6.4,12.2"/></g></svg>
<div class="a" style="left:32px;top:549px;width:229px;height:27px;background:#333333;border:1px solid #555555;border-bottom:none"></div>
<svg class="a" style="left:39px;top:555px;" width="14" height="14" viewBox="0 0 14 14"><circle cx="8.5" cy="5.5" r="4" fill="none" stroke="#e0e0e0" stroke-width="1.1"/><line x1="5.6" y1="8.4" x2="1" y2="13" stroke="#e0e0e0" stroke-width="1.2"/></svg>
<div class="t" style="left:59px;top:559px;font-size:9.85px;line-height:9.85px;color:#d4d4d4;font-weight:normal;font-style:normal;font-family:'Liberation Sans',sans-serif;">Buscar cualquier cosa</div>
<svg class="a" style="left:270px;top:555px;" width="15" height="15" viewBox="0 0 15 15"><circle cx="7.2" cy="7.6" r="4.8" fill="none" stroke="#f0f0f0" stroke-width="1.5"/></svg>
<svg class="a" style="left:302px;top:556px;" width="15" height="13" viewBox="0 0 15 13"><rect x="1.5" y="3" width="7" height="7" fill="none" stroke="#e8e8e8" stroke-width="1.2"/><path d="M1.5,1 H8.5 M1.5,12 H8.5 M11.5,1 V12" stroke="#e8e8e8" stroke-width="1.2"/></svg>
<svg class="a" style="left:335px;top:553px;" width="24" height="20" viewBox="0 0 24 20"><path d="M1,6 L9,1 L17,6 V14 H1 Z" fill="#2a78d8"/><path d="M1,6 L9,10.5 L17,6" fill="#a8d0f8" stroke="#e8f2ff" stroke-width="0.8"/><circle cx="16.5" cy="15.5" r="5.2" fill="#3a3a3a" stroke="#888" stroke-width="0.8"/><text x="16.5" y="18" font-size="6.5" text-anchor="middle" fill="#fff" font-family="Liberation Sans" font-weight="bold">14</text></svg>
<svg class="a" style="left:368px;top:554px;" width="17" height="17" viewBox="0 0 17 17"><circle cx="8.5" cy="8.5" r="8" fill="#1a7ad8"/><path d="M1,9 Q2,1 9,0.5 Q16,1 16.5,8 Q16,11 12,11 H7 Q8,13 11,13.5 Q6,16 3,13 Q1,11 1,9 Z" fill="#3ac8e8"/><path d="M10,5 Q16,5 16.5,9 Q15,11 12,11 H7 Q6,7 10,5 Z" fill="#4ad08a"/><circle cx="10.5" cy="8.5" r="2.6" fill="#1a5ab0"/></svg>
<svg class="a" style="left:401px;top:555px;" width="17" height="15" viewBox="0 0 17 15"><path d="M0.5,2 H6 L7.5,3.5 H16 V14 H0.5 Z" fill="#e8b830"/><rect x="0.5" y="5" width="15.5" height="9" fill="#f8d048"/><rect x="5" y="9" width="7" height="5" fill="#2a88d8"/></svg>
<svg class="a" style="left:433px;top:553px;" width="17" height="18" viewBox="0 0 17 18"><path d="M5,4 Q5,1 8.5,1 Q12,1 12,4" fill="none" stroke="#ddd" stroke-width="1.2"/><rect x="1" y="4.5" width="15" height="12.5" fill="#f2f2f2"/><rect x="5" y="8" width="3.3" height="3.3" fill="#f05030"/><rect x="8.8" y="8" width="3.3" height="3.3" fill="#70c030"/><rect x="5" y="11.8" width="3.3" height="3.3" fill="#20a0f0"/><rect x="8.8" y="11.8" width="3.3" height="3.3" fill="#f8c010"/></svg>
<svg class="a" style="left:466px;top:553px;" width="18" height="19" viewBox="0 0 18 19"><rect x="0" y="0" width="18" height="19" fill="#e8c020"/><path d="M5,17 V7 Q5,3 9,3 Q13,3 13,7 V17 H10.5 V14 H8 V17 Z" fill="#d81818"/><rect x="7" y="5.5" width="7" height="3.5" rx="1.5" fill="#9ad8f0"/><rect x="3" y="9" width="2.5" height="6" fill="#b01010"/></svg>
<svg class="a" style="left:500px;top:553px;" width="16" height="19" viewBox="0 0 16 19"><path d="M2,3 L5,0.5 H11 L14,3 L15,6 L13,14 L8,18 L3,14 L1,6 Z" fill="#f05a24"/><path d="M5,7 L8,9 L11,7 L10,12 L8,14 L6,12 Z" fill="#fff"/></svg>
<div class="a" style="left:500px;top:574px;width:22px;height:2px;background:#8ad0f0;"></div>
<svg class="a" style="left:533px;top:554px;" width="17" height="17" viewBox="0 0 17 17"><polygon points="8.5,0 11,6 17,8.5 11,11 8.5,17 6,11 0,8.5 6,6" fill="#c8c8c8" stroke="#555" stroke-width="0.6"/><circle cx="8.5" cy="8.5" r="2.5" fill="#666"/></svg>
<div class="a" style="left:559.5px;top:549px;width:32px;height:27px;background:#a86428;"></div>
<div class="a" style="left:559.5px;top:574px;width:32px;height:2px;background:#f08a30;"></div>
<svg class="a" style="left:566px;top:554px;" width="18" height="18" viewBox="0 0 18 18"><circle cx="9" cy="9" r="8.3" fill="#1ed760"/><path d="M4,6.5 Q9,4.5 14,7 M4.5,9.3 Q9,7.8 13.3,9.8 M5,12 Q9,11 12.5,12.6" stroke="#111" stroke-width="1.4" fill="none" stroke-linecap="round"/></svg>
<svg class="a" style="left:598px;top:553px;" width="18" height="18" viewBox="0 0 18 18"><rect x="0" y="0" width="18" height="18" fill="#20b8c0"/><circle cx="9" cy="9" r="6" fill="none" stroke="#fff" stroke-width="1.5"/><path d="M4,15 L5,11" stroke="#fff" stroke-width="1.5"/><path d="M6.5,7 Q7,11 11.5,11.5" stroke="#fff" stroke-width="1.4" fill="none"/></svg>
<svg class="a" style="left:631px;top:554px;" width="20" height="17" viewBox="0 0 20 17"><circle cx="14.5" cy="3.5" r="2.5" fill="#7b83eb"/><path d="M11,6.5 H18.5 V12 Q18.5,15 15,15 Q11.5,15 11,12 Z" fill="#5b5fc7"/><circle cx="9" cy="2.8" r="2.8" fill="#7b83eb"/><rect x="4" y="6" width="11" height="10.5" rx="1.5" fill="#7b83eb"/><rect x="1" y="4.5" width="9" height="9" rx="1" fill="#4b53bc"/><path d="M3,7 H8 M5.5,7 V12" stroke="#fff" stroke-width="1.3"/></svg>
<div class="a" style="left:658px;top:549px;width:32.5px;height:27px;background:#55534f;"></div>
<div class="a" style="left:658px;top:574px;width:32.5px;height:2px;background:#8ad0f0;"></div>
<svg class="a" style="left:665px;top:554px;" width="18" height="18" viewBox="0 0 18 18"><rect x="0" y="0" width="18" height="18" fill="#f4ece6"/><path d="M3.5,15.5 L8,2.5 H10.5 L15,15.5 H12 L9.2,6.5 L6.5,15.5 Z M7.5,10 H11.5 V12 H7" fill="#c8101e"/></svg>
<svg class="a" style="left:700px;top:553px;" width="14" height="19" viewBox="0 0 14 19"><path d="M6,0.5 L3,9 L8,8.5 L5,18.5 L12,7.5 L7,8 L10,0.5 Z" fill="#f4f4f4"/></svg>
<svg class="a" style="left:731px;top:554px;" width="20" height="17" viewBox="0 0 20 17"><circle cx="12" cy="9.5" r="6" fill="#f5792a"/><circle cx="12" cy="9.5" r="3.3" fill="#fff"/><circle cx="12" cy="9.5" r="1.8" fill="#265787"/><path d="M1,7 L9,4 M4,11 L8,9" stroke="#f5792a" stroke-width="1.8"/></svg>
<svg class="a" style="left:841px;top:555px;" width="18" height="17" viewBox="0 0 18 17"><circle cx="8" cy="8" r="7.5" fill="#2a8ae0" stroke="#fff" stroke-width="1"/><text x="8" y="11.8" font-size="10.5" font-weight="bold" fill="#fff" text-anchor="middle" font-family="Liberation Sans">?</text><circle cx="13.5" cy="13" r="3.3" fill="#1a6ac8" stroke="#fff" stroke-width="0.8"/><rect x="13" y="11.5" width="1.2" height="3" fill="#fff"/></svg>
<svg class="a" style="left:863px;top:557px;" width="10" height="8" viewBox="0 0 10 8"><path d="M1,6.5 L5,2 L9,6.5" stroke="#e0e0e0" stroke-width="1.1" fill="none"/></svg>
<svg class="a" style="left:876px;top:556px;" width="16" height="13" viewBox="0 0 16 13"><path d="M1,9 Q1,5 4,5 Q5,1 9,2 Q12,2 12,6 Q14,6 14,9 Z" fill="#c8c8c8"/><circle cx="12" cy="10" r="3" fill="#e01818"/><path d="M10.7,8.7 L13.3,11.3 M13.3,8.7 L10.7,11.3" stroke="#fff" stroke-width="0.8"/></svg>
<svg class="a" style="left:894px;top:558px;" width="13" height="8" viewBox="0 0 13 8"><rect x="0.5" y="1" width="10" height="6" fill="none" stroke="#e8e8e8" stroke-width="1"/><rect x="1.5" y="2" width="4" height="4" fill="#e8e8e8"/><rect x="11" y="3" width="1.5" height="2" fill="#e8e8e8"/></svg>
<svg class="a" style="left:910px;top:556px;" width="14" height="12" viewBox="0 0 14 12"><path d="M1,11 A10,10 0 0 1 11,1 M3.5,11 A7.5,7.5 0 0 1 11,3.5 M6,11 A5,5 0 0 1 11,6 M8.5,11 A2.5,2.5 0 0 1 11,8.5" stroke="#d8d8d8" stroke-width="0.9" fill="none"/></svg>
<svg class="a" style="left:926px;top:556px;" width="14" height="12" viewBox="0 0 14 12"><path d="M1,4 H3.5 L7,1 V11 L3.5,8 H1 Z" fill="none" stroke="#e0e0e0" stroke-width="0.9"/><path d="M9,4 Q10.5,6 9,8 M11,2.5 Q13.5,6 11,9.5" stroke="#e0e0e0" stroke-width="0.9" fill="none"/></svg>
<div class="t" style="left:945px;top:554px;font-size:8.4px;line-height:8.4px;color:#e8e8e8;font-weight:normal;font-style:normal;font-family:'Liberation Sans',sans-serif;">03:22 p. m.</div>
<div class="t" style="left:945px;top:566px;font-size:8.45px;line-height:8.45px;color:#e8e8e8;font-weight:normal;font-style:normal;font-family:'Liberation Sans',sans-serif;">19/11/2020</div>
<svg class="a" style="left:997px;top:554px;" width="22" height="20" viewBox="0 0 22 20"><path d="M1,1.5 H13 V11 H6 L3,13.5 V11 H1 Z" fill="#e8e8e8"/><path d="M3,4 H11 M3,6.5 H11 M3,9 H9" stroke="#555" stroke-width="0.8"/><circle cx="13.5" cy="13.5" r="5.5" fill="#333" stroke="#aaa" stroke-width="0.8"/><text x="13.5" y="16.3" font-size="7.2" text-anchor="middle" fill="#fff" font-family="Liberation Sans">16</text></svg>
<svg class="a" style="left:204.7px;top:500px;" width="37" height="18" viewBox="0 0 37 18"><path d="M3,3 V15 M5,3 V15" stroke="#8a8a8a" stroke-width="0.8" stroke-dasharray="0.8,1.2"/><path d="M10,6 L16,12 M16,6 L10,12" stroke="#f4f4f4" stroke-width="1.5"/><path d="M27.5,8.5 L32.8,13.2" stroke="#dcdcdc" stroke-width="2" stroke-linecap="round"/><path d="M24.8,6.2 A3,3 0 1 0 29.6,9.6 L27.6,9.2 L26.2,7.8 L25.8,5.6 Z" fill="#dcdcdc"/></svg>
<svg class="a" style="left:241px;top:500px;" width="30" height="18" viewBox="0 0 30 18"><rect x="3" y="4" width="10" height="10" rx="1" fill="#d8dce4" stroke="#9aa" stroke-width="0.5"/><path d="M5,7 L7.5,8.5 L5,10 M8,11 H11" stroke="#556" stroke-width="0.8" fill="none"/><polygon points="16,8 20,8 18,10.5" fill="#888"/><rect x="21.6" y="4" width="1" height="10.5" fill="#000"/></svg>
<svg class="a" style="left:810px;top:505px;" width="8" height="6" viewBox="0 0 8 6"><polygon points="1,5 4,1.5 7,5" fill="#222"/></svg>
</body></html>
